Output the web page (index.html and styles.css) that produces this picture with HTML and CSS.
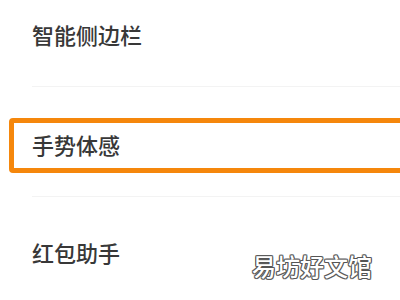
FILE: index.html
```html
<!DOCTYPE html>
<html lang="zh-CN">
<head>
  <meta charset="UTF-8" />
  <title>设置</title>
  <link rel="stylesheet" href="styles.css">
</head>
<body>
  <div class="list">
    <div class="row first">智能侧边栏</div>
    <div class="divider first-divider"></div>
    <div class="row selected">手势体感</div>
    <div class="divider second-divider"></div>
    <div class="row last">红包助手</div>
  </div>
  <div class="watermark">易坊好文馆</div>
</body>
</html>
```

FILE: styles.css
```css
body {
  margin: 0;
  background: #ffffff;
  font-family: "Noto Sans CJK SC", "Noto Sans", sans-serif;
  width: 400px;
  height: 300px;
  overflow: hidden;
  position: relative;
}
.list {
  display: flex;
  flex-direction: column;
}
.row {
  display: flex;
  align-items: center;
  padding-left: 32px;
  font-size: 22px;
  color: #383838;
  font-weight: 500;
}
.first {
  height: 68px;
}
.divider {
  height: 1px;
  margin-left: 32px;
  background: #f3f3f3;
}
.first-divider {
  margin-top: 18px;
}
.selected {
  margin-top: 31px;
  margin-left: 9px;
  margin-right: -20px;
  height: 55px;
  box-sizing: border-box;
  border: 5px solid #f5870c;
  border-radius: 4px;
  padding-left: 18px;
  padding-bottom: 3px;
}
.second-divider {
  margin-top: 23px;
}
.last {
  height: 110px;
}
.watermark {
  position: absolute;
  right: 28px;
  bottom: 17px;
  font-size: 24px;
  font-weight: 500;
  color: #ffffff;
  text-shadow: 1px 0 0 #555, -1px 0 0 #555, 0 1px 0 #555, 0 -1px 0 #555,
    1px 1px 0 #777, -1px -1px 0 #777, 1px -1px 0 #777, -1px 1px 0 #777;
}
```
